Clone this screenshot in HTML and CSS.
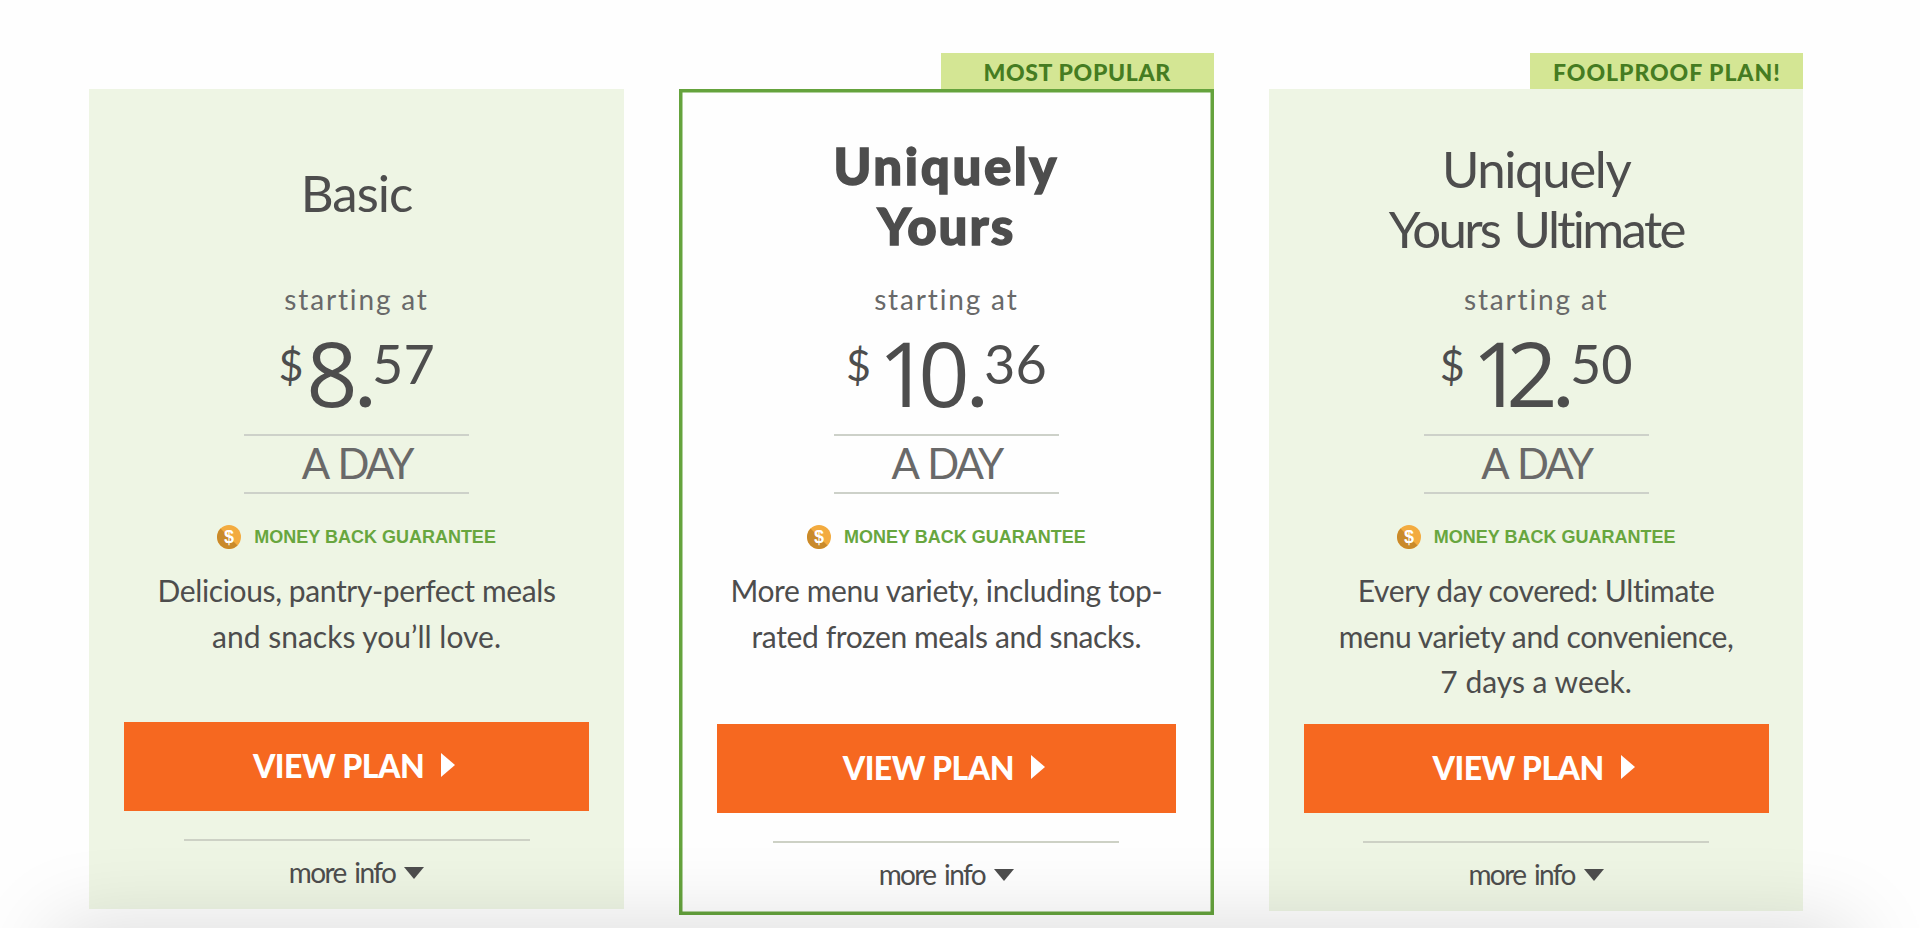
FILE: index.html
```
<!DOCTYPE html>
<html lang="en">
<head>
<meta charset="UTF-8">
<meta name="viewport" content="width=device-width, initial-scale=1.0">
<title>Choose Your Plan</title>
<link rel="stylesheet" href="styles.css">
</head>
<body>
<div class="plans">
    <div class="plan basic">
        <h2 class="title">Basic</h2>
        <p class="starting">starting at</p>
        <div class="price">
            <span class="currency">$</span><span class="dollars">8</span><span class="point">.</span><span class="cents">57</span>
        </div>
        <div class="per-day">A DAY</div>
        <div class="guarantee">
            <svg class="coin" viewBox="0 0 24 24">
                <circle cx="12" cy="12" r="12" fill="#f3ab3f"/>
                <path d="M3.5 3.5A12 12 0 0 0 20.5 20.5Z" fill="#c98a2b"/>
                <text x="12" y="18" text-anchor="middle" class="coin-sign">$</text>
            </svg>
            <span>MONEY BACK GUARANTEE</span>
        </div>
        <p class="description">Delicious, pantry-perfect meals<br><span class="loose">and snacks you’ll love.</span></p>
        <a class="button">VIEW PLAN <i class="arrow-right"></i></a>
        <div class="divider"></div>
        <a class="more">more info <i class="arrow-down"></i></a>
    </div>

    <div class="plan popular">
        <div class="tag">MOST POPULAR</div>
        <h2 class="title">Uniquely<br><span class="second">Yours</span></h2>
        <p class="starting">starting at</p>
        <div class="price">
            <span class="currency">$</span><span class="dollars">10</span><span class="point">.</span><span class="cents">36</span>
        </div>
        <div class="per-day">A DAY</div>
        <div class="guarantee">
            <svg class="coin" viewBox="0 0 24 24">
                <circle cx="12" cy="12" r="12" fill="#f3ab3f"/>
                <path d="M3.5 3.5A12 12 0 0 0 20.5 20.5Z" fill="#c98a2b"/>
                <text x="12" y="18" text-anchor="middle" class="coin-sign">$</text>
            </svg>
            <span>MONEY BACK GUARANTEE</span>
        </div>
        <p class="description">More menu variety, including top-<br>rated frozen meals and snacks.</p>
        <a class="button">VIEW PLAN <i class="arrow-right"></i></a>
        <div class="divider"></div>
        <a class="more">more info <i class="arrow-down"></i></a>
    </div>

    <div class="plan ultimate">
        <div class="tag">FOOLPROOF PLAN!</div>
        <h2 class="title">Uniquely<br><span class="second">Yours Ultimate</span></h2>
        <p class="starting">starting at</p>
        <div class="price">
            <span class="currency">$</span><span class="dollars">12</span><span class="point">.</span><span class="cents">50</span>
        </div>
        <div class="per-day">A DAY</div>
        <div class="guarantee">
            <svg class="coin" viewBox="0 0 24 24">
                <circle cx="12" cy="12" r="12" fill="#f3ab3f"/>
                <path d="M3.5 3.5A12 12 0 0 0 20.5 20.5Z" fill="#c98a2b"/>
                <text x="12" y="18" text-anchor="middle" class="coin-sign">$</text>
            </svg>
            <span>MONEY BACK GUARANTEE</span>
        </div>
        <p class="description">Every day covered: Ultimate<br>menu variety and convenience,<br><span class="loose">7 days a week.</span></p>
        <a class="button">VIEW PLAN <i class="arrow-right"></i></a>
        <div class="divider"></div>
        <a class="more">more info <i class="arrow-down"></i></a>
    </div>
    <div class="shade"><div class="shade-edge"></div></div>
</div>
</body>
</html>
```
FILE: styles.css
```
* {
    box-sizing: border-box;
}

body {
    margin: 0;
    background-color: #fefefe;
    color: #4d4d4d;
    font-family: Lato, sans-serif;
}

.plans {
    position: relative;
    display: flex;
    align-items: flex-start;
    gap: 55.3px;
    height: 928px;
    padding: 89.3px 0 0 89.3px;
    overflow: hidden;
}

.plan {
    position: relative;
    display: flex;
    flex-direction: column;
    flex-shrink: 0;
    align-items: center;
    width: 534.5px;
    height: 820px;
    padding-top: 31px;
    background-color: #eef5e4;
}

.popular {
    height: 826px;
    background-color: #fefefe;
    box-shadow: inset 0 0 0 3.5px #65a33d;
}

.ultimate {
    height: 822px;
}

.tag {
    position: absolute;
    top: -36px;
    right: 0;
    width: 273px;
    height: 36px;
    background-color: #d4e694;
    color: #457c22;
    font-size: 23px;
    font-weight: 900;
    line-height: 39px;
    letter-spacing: 0.65px;
    text-align: center;
}

.ultimate .tag {
    letter-spacing: 0.95px;
}

.title {
    display: flex;
    flex-direction: column;
    align-items: center;
    justify-content: center;
    height: 146px;
    margin: 0;
    font-size: 51px;
    font-weight: 400;
    line-height: 60.5px;
    letter-spacing: -1px;
    text-align: center;
}

.title br {
    display: none;
}

.popular .title {
    padding-top: 6px;
    font-weight: 900;
    letter-spacing: 2.6px;
    -webkit-text-stroke: 1.4px #4d4d4d;
}

.popular .second {
    letter-spacing: 2px;
}

.ultimate .title {
    padding-top: 12px;
    letter-spacing: -1.4px;
}

.ultimate .second {
    letter-spacing: -2.7px;
    word-spacing: 4px;
}

.starting {
    margin: 16px 0 0;
    color: #696969;
    font-size: 28px;
    line-height: 34px;
    letter-spacing: 1.84px;
}

.price {
    display: flex;
    align-items: flex-start;
    height: 90px;
    margin-top: 11px;
}

.currency {
    font-size: 43px;
    line-height: 75px;
}

.dollars,
.point {
    font-size: 90px;
    line-height: 90px;
}

.dollars {
    margin-left: 3px;
    font-family: "Open Sans", sans-serif;
    letter-spacing: -3px;
}

.point {
    letter-spacing: -4px;
}

.cents {
    font-size: 54px;
    line-height: 74px;
}

.popular .dollars {
    margin-left: 7px;
    letter-spacing: -11px;
}

.popular .point {
    margin-left: 8px;
}

.ultimate .dollars {
    margin-left: 7px;
    letter-spacing: -17px;
}

.ultimate .point {
    margin-left: 12px;
}

.per-day {
    width: 225px;
    height: 60px;
    margin-top: 17px;
    border-top: 2px solid #cdd1c9;
    border-bottom: 2px solid #cdd1c9;
    color: #696969;
    font-size: 42px;
    line-height: 54px;
    letter-spacing: -3px;
    word-spacing: 4px;
    text-align: center;
}

.guarantee {
    display: flex;
    align-items: center;
    gap: 13px;
    height: 24px;
    margin-top: 31px;
    color: #68a63e;
    font-family: "Liberation Sans", Arial, sans-serif;
    font-size: 18px;
    font-weight: 700;
}

.coin {
    width: 24px;
    height: 24px;
}

.coin-sign {
    fill: #fff;
    font-size: 18px;
}

.description {
    height: 153.8px;
    margin: 19.2px 0 0;
    font-size: 30px;
    line-height: 45.5px;
    letter-spacing: -0.38px;
    text-align: center;
}

.loose {
    letter-spacing: 0;
}

.popular .description,
.ultimate .description {
    height: 155.8px;
}

.button {
    display: flex;
    align-items: center;
    justify-content: center;
    gap: 17px;
    width: 465px;
    height: 89px;
    padding: 0 5px 2px 0;
    background-color: #f66820;
    color: #fff;
    font-size: 32px;
    font-weight: 900;
    letter-spacing: -0.5px;
}

.popular .button {
    width: 459px;
}

.arrow-right {
    margin-bottom: 1px;
    border-top: 12.5px solid transparent;
    border-bottom: 12.5px solid transparent;
    border-left: 14px solid #fff;
}

.divider {
    width: 346px;
    height: 2px;
    margin-top: 28px;
    background-color: #cdd1c5;
}

.more {
    display: flex;
    align-items: center;
    gap: 9px;
    margin-top: 14px;
    font-size: 28px;
    line-height: 34px;
    letter-spacing: -1.6px;
    word-spacing: 3px;
}

.arrow-down {
    margin-top: 2px;
    border-left: 10.5px solid transparent;
    border-right: 10.5px solid transparent;
    border-top: 12px solid #4d4d4d;
}

/* shade rising from under the fold */
.shade {
    position: absolute;
    bottom: 0;
    left: 0;
    width: 100%;
    height: 110px;
    overflow: hidden;
    pointer-events: none;
}

.shade-edge {
    width: 1795px;
    height: 200px;
    margin: 110px 0 0 55px;
    box-shadow: 0 0 85px rgba(0, 0, 0, 0.15);
}
```
